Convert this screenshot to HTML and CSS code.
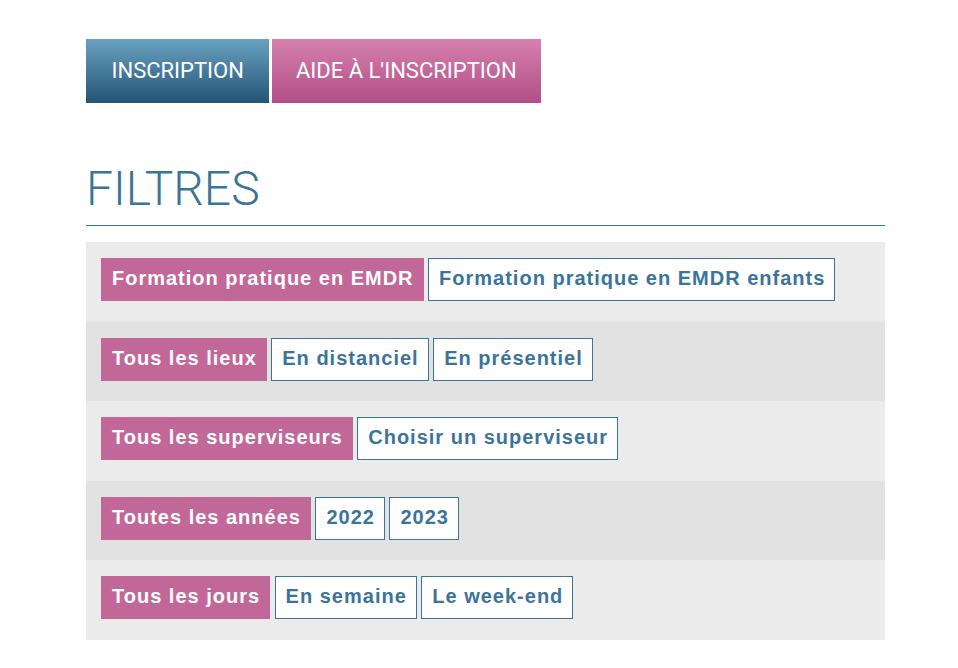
FILE: index.html
```html
<!DOCTYPE html>
<html lang="fr">
<head>
    <meta charset="UTF-8">
    <meta name="viewport" content="width=device-width, initial-scale=1.0">
    <title>Filtres</title>
    <link rel="stylesheet" href="styles.css">
</head>
<body>

<div class="page">
    <!-- boutons du haut -->
    <div class="top-buttons">
        <a href="#" class="btn btn-blue">INSCRIPTION</a>
        <a href="#" class="btn btn-pink">AIDE À L'INSCRIPTION</a>
    </div>

    <h2 class="section-title">FILTRES</h2>

    <!-- filtres -->
    <div class="filters">
        <div class="filter-row">
            <a href="#" class="tag active">Formation pratique en EMDR</a>
            <a href="#" class="tag">Formation pratique en EMDR enfants</a>
        </div>
        <div class="filter-row">
            <a href="#" class="tag active">Tous les lieux</a>
            <a href="#" class="tag">En distanciel</a>
            <a href="#" class="tag">En présentiel</a>
        </div>
        <div class="filter-row">
            <a href="#" class="tag active">Tous les superviseurs</a>
            <a href="#" class="tag">Choisir un superviseur</a>
        </div>
        <div class="filter-row">
            <a href="#" class="tag active">Toutes les années</a>
            <a href="#" class="tag">2022</a>
            <a href="#" class="tag">2023</a>
        </div>
        <div class="filter-row">
            <a href="#" class="tag active">Tous les jours</a>
            <a href="#" class="tag">En semaine</a>
            <a href="#" class="tag">Le week-end</a>
        </div>
    </div>
</div>

</body>
</html>
```

FILE: styles.css
```css
body {
    margin: 0;
    padding: 0;
    background-color: white;
    font-family: "Liberation Sans", Arial, sans-serif;
}
.page {
    width: 799px;
    padding: 39px 0 0 86px;
}
.top-buttons {
    display: flex;
    gap: 3px;
}
.btn {
    display: block;
    height: 64px;
    line-height: 64px;
    padding: 0 25px;
    font-family: Roboto, sans-serif;
    font-size: 22px;
    color: white;
    text-decoration: none;
}
.btn-blue {
    padding: 0 25px 0 25.5px;
    background: linear-gradient(to bottom, #6aa1c0, #235476);
}
.btn-pink {
    padding: 0 24px;
    background: linear-gradient(to bottom, #d581ae, #b24e87);
}
.section-title {
    margin: 62px 0 16px 0;
    padding-bottom: 12px;
    border-bottom: 1px solid #3b7499;
    font-family: Roboto, sans-serif;
    font-weight: 300;
    font-size: 48px;
    line-height: 48px;
    color: #3b7499;
}
.filters {
    background-color: #ebebeb;
}
.filter-row {
    display: flex;
    gap: 4.5px;
    height: 79.6px;
    box-sizing: border-box;
    padding: 16px 15px 0 15px;
}
.filter-row:nth-child(even) {
    background-color: #e2e2e2;
}
.tag {
    display: block;
    height: 43px;
    box-sizing: border-box;
    padding: 8px 9px 10px 10px;
    line-height: 23px;
    font-size: 20px;
    font-weight: bold;
    letter-spacing: 1px;
    color: #3b7499;
    background-color: white;
    border: 1px solid #3b7499;
    text-decoration: none;
}
.tag.active {
    color: white;
    background-color: #c26898;
    border-color: #c26898;
}
```
